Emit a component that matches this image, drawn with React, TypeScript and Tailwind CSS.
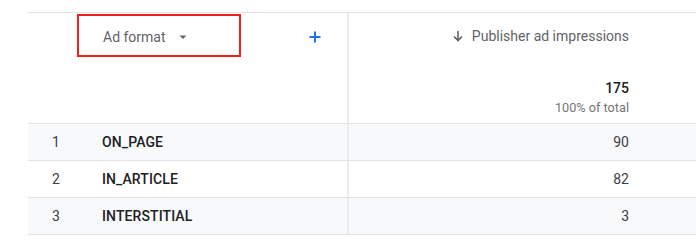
import React from "react";

const rows = [
  { n: 1, name: "ON_PAGE", v: "90", bg: "bg-[#f8f9fa]" },
  { n: 2, name: "IN_ARTICLE", v: "82", bg: "bg-white" },
  { n: 3, name: "INTERSTITIAL", v: "3", bg: "bg-[#f8f9fa]" },
];

export default function App() {
  return (
    <div
      className="w-[696px] h-[247px] bg-white overflow-hidden pt-[12px]"
      style={{ fontFamily: "Roboto, 'Liberation Sans', sans-serif" }}
    >
      <div className="ml-[28px] border-t border-[#e3e3e3]">
        {/* header */}
        <div className="flex h-[111px] border-b border-[#e3e3e3]">
          <div className="w-[319px] relative">
            <div className="absolute left-[49px] top-[1px] w-[164px] h-[43px] border-2 border-[#f0201c]" />
            <div className="flex items-center h-[48px] pl-[75px]">
              <span className="text-[14px] text-[#5f6368]">Ad format</span>
              <svg width="10" height="10" viewBox="0 0 10 10" className="ml-[12px]">
                <path d="M1.5 3.5 L8.5 3.5 L5 7 Z" fill="#5f6368" />
              </svg>
              <svg width="14" height="14" viewBox="0 0 14 14" className="ml-[120px]">
                <path d="M7 1.5 V12.5 M1.5 7 H12.5" stroke="#1a73e8" strokeWidth="2" />
              </svg>
            </div>
          </div>
          <div className="w-[2px] bg-[#ececec]" />
          <div className="flex-1 flex flex-col items-end pr-[67px]">
            <div className="flex items-center h-[46px] text-[14px] text-[#5f6368]">
              <svg width="14" height="14" viewBox="0 0 14 14" className="mr-[7px]">
                <path d="M7 2 V11.5 M3 7.5 L7 11.5 L11 7.5" stroke="#5f6368" strokeWidth="1.6" fill="none" />
              </svg>
              <span>Publisher ad impressions</span>
            </div>
            <div className="mt-[19px] text-[14px] font-medium text-[#202124] leading-[20px]">175</div>
            <div className="text-[12.7px] text-[#757575] leading-[19px]">100% of total</div>
          </div>
        </div>
        {rows.map((r) => (
          <div key={r.n} className={`flex h-[37px] items-center border-b border-[#e3e3e3] ${r.bg}`}>
            <div className="w-[319px] flex items-center">
              <span className="w-[74px] pl-[24px] text-[14px] text-[#3c4043]">{r.n}</span>
              <span className="text-[14px] font-medium text-[#202124] tracking-[0.1px]">{r.name}</span>
            </div>
            <div className="w-[2px] self-stretch bg-[#ececec]" />
            <div className="flex-1 text-right pr-[67px] text-[14px] text-[#3c4043]">{r.v}</div>
          </div>
        ))}
      </div>
    </div>
  );
}
